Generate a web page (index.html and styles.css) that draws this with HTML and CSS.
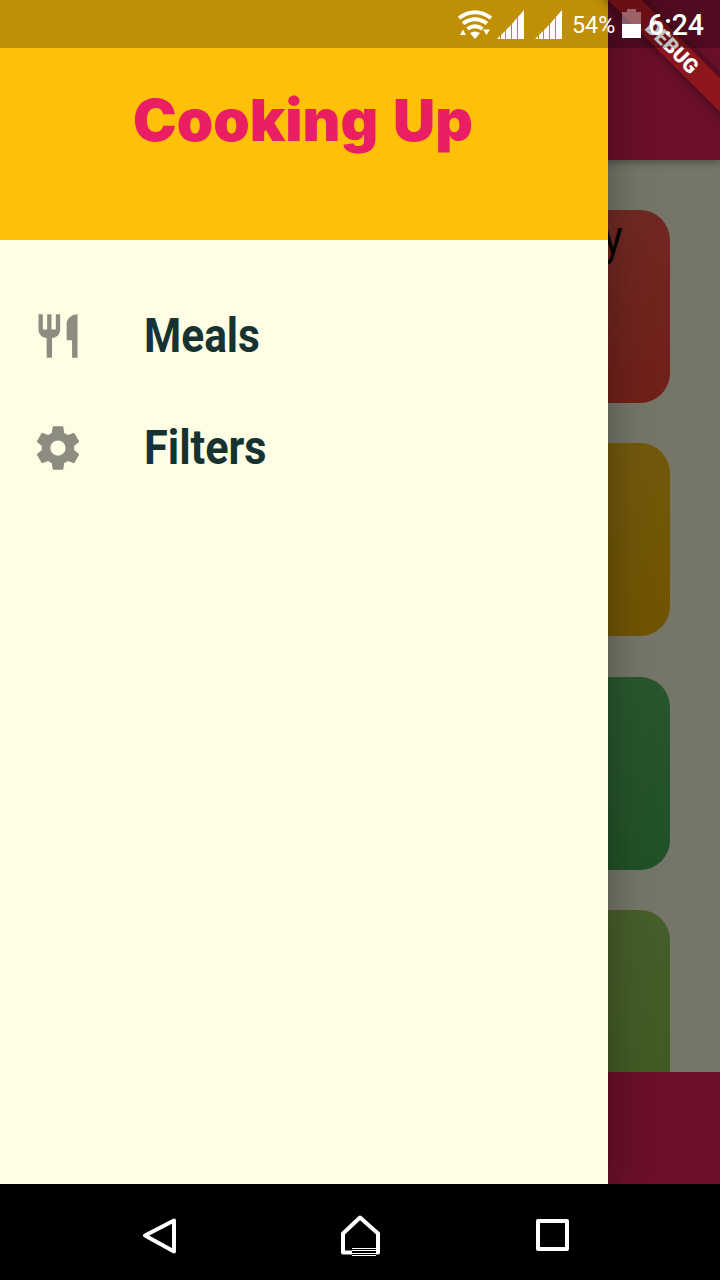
FILE: index.html
```html
<!DOCTYPE html>
<html lang="en">
<head>
<meta charset="utf-8">
<title>Cooking Up</title>
<link rel="stylesheet" href="styles.css">
</head>
<body>
<div class="phone">
  <div class="app">
    <div class="page">
      <header class="appbar"></header>
      <main class="cards">
        <div class="card red"><span class="card-title">y</span></div>
        <div class="card amber"></div>
        <div class="card green"></div>
        <div class="card lime"></div>
      </main>
      <div class="tabbar"></div>
    </div>
    <aside class="drawer">
      <div class="drawer-head"><h1>Cooking Up</h1></div>
      <nav class="menu">
        <a class="item">
          <svg class="item-icon" viewBox="0 0 24 24"><path d="M11 9H9V2H7v7H5V2H3v7c0 2.12 1.66 3.84 3.75 3.97V22h2.5v-9.03C11.34 12.84 13 11.12 13 9V2h-2v7zm5-3v8h2.5v8H21V2c-2.76 0-5 2.24-5 4z"/></svg>
          <span class="label">Meals</span>
        </a>
        <a class="item">
          <svg class="item-icon" viewBox="0 0 24 24"><path d="M19.43 12.98c.04-.32.07-.64.07-.98s-.03-.66-.07-.98l2.11-1.65c.19-.15.24-.42.12-.64l-2-3.46c-.12-.22-.39-.3-.61-.22l-2.49 1c-.52-.4-1.08-.73-1.69-.98l-.38-2.65C14.46 2.18 14.25 2 14 2h-4c-.25 0-.46.18-.49.42l-.38 2.65c-.61.25-1.17.59-1.69.98l-2.49-1c-.23-.09-.49 0-.61.22l-2 3.46c-.13.22-.07.49.12.64l2.11 1.65c-.04.32-.07.65-.07.98s.03.66.07.98l-2.11 1.65c-.19.15-.24.42-.12.64l2 3.46c.12.22.39.3.61.22l2.49-1c.52.4 1.08.73 1.69.98l.38 2.65c.03.24.24.42.49.42h4c.25 0 .46-.18.49-.42l.38-2.65c.61-.25 1.17-.59 1.69-.98l2.49 1c.23.09.49 0 .61-.22l2-3.46c.12-.22.07-.49-.12-.64l-2.11-1.65zM12 15.5c-1.93 0-3.5-1.57-3.5-3.5s1.57-3.5 3.5-3.5 3.5 1.57 3.5 3.5-1.57 3.5-3.5 3.5z"/></svg>
          <span class="label wide">Filters</span>
        </a>
      </nav>
    </aside>
    <div class="debug">DEBUG</div>
    <div class="status">
      <svg class="wifi" width="36" height="32" viewBox="0 0 36 32">
        <g fill="none" stroke="#fff" stroke-width="3.9">
          <path d="M2 10Q18-1.500 34 10"/><path d="M6 15.500Q18 7 30 15.500"/><path d="M10.500 21Q18 15.500 25.500 21"/>
        </g>
        <path fill="#fff" d="M13 25Q18 22 23 25L18 31ZM3 27L6 21.500 9 27ZM26 21.500H33L29.500 27Z"/>
      </svg>
      <svg class="signal" width="28" height="30" viewBox="0 0 28 30"><path fill="#fff" d="M0 29L3 26V29ZM4 25L8 21V29H4ZM9 20L14 15V29H9ZM15 14L20 8V29H15ZM21 7L27 0V29H21Z"/></svg>
      <svg class="signal" width="28" height="30" viewBox="0 0 28 30"><path fill="#fff" d="M0 29L3 26V29ZM4 25L8 21V29H4ZM9 20L14 15V29H9ZM15 14L20 8V29H15ZM21 7L27 0V29H21Z"/></svg>
      <span class="percent">54%</span>
      <svg class="battery" width="19" height="30" viewBox="0 0 19 30"><path fill="#fff" fill-opacity=".35" d="M0 3H5V0H14V3H19V15H0Z"/><path fill="#fff" d="M0 15H19V29H0Z"/></svg>
      <span class="clock">6:24</span>
    </div>
  </div>
  <footer class="navbar">
    <svg width="40" height="44" viewBox="0 0 40 44"><path d="M34 6.500V37.500L5 21.500Z"/></svg>
    <svg width="40" height="44" viewBox="0 0 40 44"><path d="M3 19.500L20 3.500 38 19.500V38.500H3Z"/><path class="knock" d="M12 34H36V43H12Z"/><path class="lines" d="M12 34.500H36M12 36.500H36M12 39.500H36M12 41.500H36"/></svg>
    <svg width="40" height="44" viewBox="0 0 40 44"><path d="M5 7H34V35H5Z"/></svg>
  </footer>
</div>
</body>
</html>
```
FILE: styles.css
```css
body { margin: 0; }
.phone { width: 720px; height: 1280px; display: flex; flex-direction: column; overflow: hidden; font-family: Roboto, sans-serif; }
.app { position: relative; height: 1184px; overflow: hidden; }
.page { isolation: isolate; height: 100%; display: flex; flex-direction: column; background: #757568; }
.appbar { height: 160px; flex: none; background: #6b0f2b; box-shadow: 0 2px 8px rgba(0,0,0,.35); z-index: 1; }
.cards { flex: 1; min-height: 0; overflow: hidden; padding: 50px 50px 0; display: flex; flex-direction: column; gap: 40.3px; }
.card { flex: none; height: 193px; border-radius: 30px; box-sizing: border-box; padding: 0 47px 0 0; text-align: right; }
.red { background: linear-gradient(135deg, #75453f, #701e18); }
.amber { background: linear-gradient(135deg, #7a6830, #705300); }
.green { background: linear-gradient(135deg, #3f6847, #205025); }
.lime { background: linear-gradient(135deg, #566940, #405a22); }
.card-title { display: inline-block; font-size: 48px; line-height: 56px; color: #070303; transform: scaleX(.88); transform-origin: right; }
.tabbar { height: 112px; flex: none; background: #6b0f2b; }
.debug { position: absolute; left: 559px; top: 35px; width: 226px; height: 24px; line-height: 24px; transform: rotate(45deg); background: #8d151d; box-shadow: 0 0 12px rgba(0,0,0,.5); color: #fff; font-size: 20.4px; font-weight: 900; text-align: center; }
.drawer { position: absolute; left: 0; top: 0; width: 608px; height: 1184px; background: #fffde4; box-shadow: 0 10px 40px rgba(0,0,0,.34); }
.drawer-head { height: 240px; box-sizing: border-box; padding: 80px 0 0 133px; background: #ffc108; }
h1 { margin: 0; font: 900 58px/80px Inter, sans-serif; word-spacing: 3px; color: #e91e63; white-space: nowrap; transform: scaleX(1.008); transform-origin: left; }
.menu { padding-top: 40px; }
.item { display: flex; align-items: center; height: 112px; padding-left: 32px; gap: 60px; }
.item-icon { width: 52px; height: 52px; fill: #8d8c80; }
.label { font-size: 48px; line-height: 56px; font-weight: 700; color: #163332; transform: scaleX(.885); transform-origin: left; }
.label.wide { transform: scaleX(.9); }
.status { position: absolute; left: 0; top: 0; width: 720px; height: 48px; box-sizing: border-box; padding-left: 457px; display: flex; align-items: flex-start; background: rgba(0,0,0,.25); color: #fff; }
.wifi { margin-top: 8px; flex: none; }
.signal { margin: 10px 0 0 4px; flex: none; }
.signal + .signal { margin-left: 10px; }
.percent { width: 50px; margin-left: 9px; font-size: 24px; line-height: 50px; white-space: nowrap; transform: scaleX(.97); transform-origin: left; }
.battery { margin: 9px 0 0; flex: none; }
.clock { margin-left: 7px; font-size: 29px; line-height: 51px; font-weight: 500; transform: scaleX(.98); transform-origin: left; }
.navbar { height: 96px; flex: none; box-sizing: border-box; padding: 8px 147px 0 140px; display: flex; align-items: center; justify-content: space-between; background: #000; }
.navbar svg:nth-child(2) { margin-left: 7px; }
.navbar path { fill: none; stroke: #fff; stroke-width: 4; stroke-linejoin: round; }
.navbar .knock { fill: #000; stroke: none; }
.navbar .lines { stroke-width: 1; }
```
